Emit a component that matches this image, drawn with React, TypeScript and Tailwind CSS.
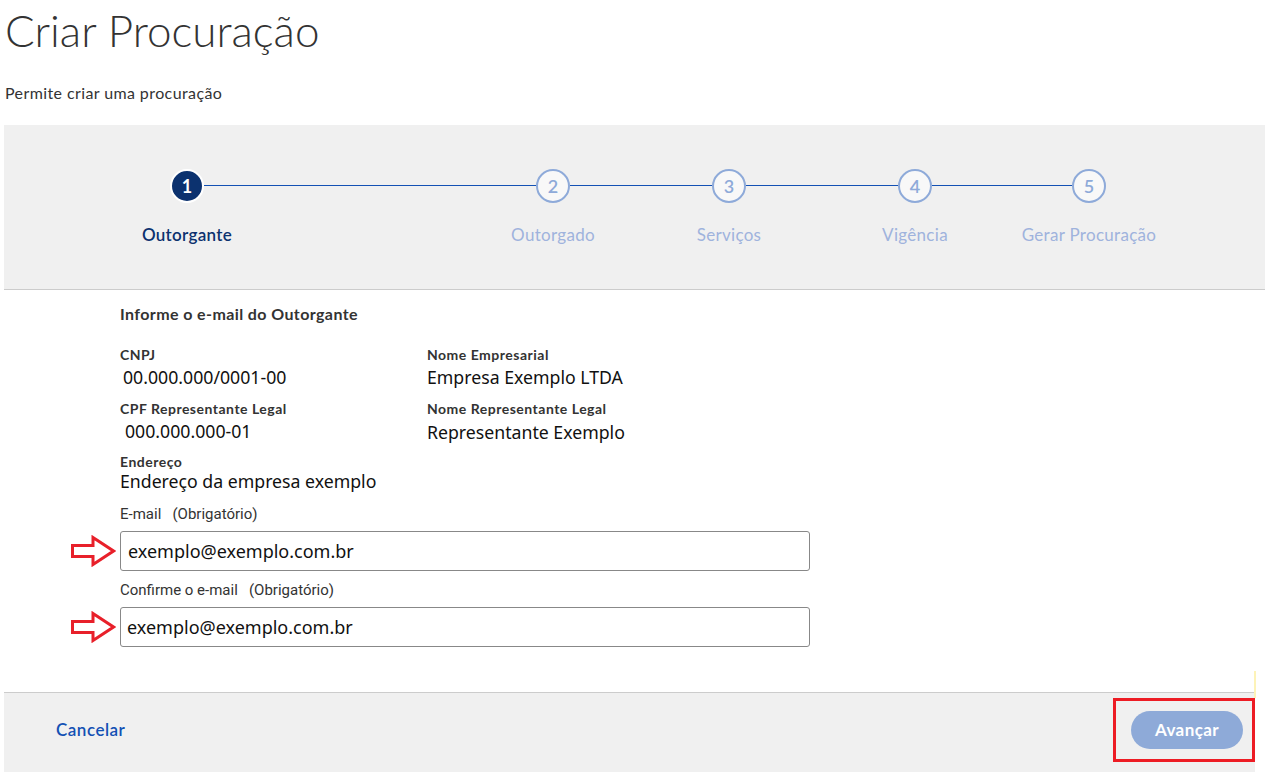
import React from "react"

const steps = [
  { n: 1, label: "Outorgante" },
  { n: 2, label: "Outorgado" },
  { n: 3, label: "Serviços" },
  { n: 4, label: "Vigência" },
  { n: 5, label: "Gerar Procuração" },
]

const segments = ["w-[332px]", "w-[142px]", "w-[152px]", "w-[140px]"]

function Arrow() {
  return (
    <svg width="46" height="32" viewBox="0 0 46 32" className="shrink-0">
      <path d="M2.5 10.5 H23 V2.5 L43.5 16 L23 29.5 V21.5 H2.5 Z" fill="#fff" stroke="#e8202a" strokeWidth="3" strokeLinejoin="miter" />
    </svg>
  )
}

function Stepper() {
  return (
    <div className="ml-[4px] h-[165px] w-[1261px] border-b border-[#cccccc] bg-[#f0f0f0] pl-[166px] pt-[44px]">
      <div className="flex items-start">
        {steps.map((s, i) => (
          <React.Fragment key={s.n}>
            <div className="flex w-[34px] flex-col items-center">
              {i === 0 ? (
                <div className="flex h-[34px] w-[34px] items-center justify-center rounded-full border-2 border-white bg-[#0c326f] text-[18px] font-bold text-white">
                  {s.n}
                </div>
              ) : (
                <div className="flex h-[34px] w-[34px] items-center justify-center rounded-full border-2 border-[#8eaad9] bg-[#f8f8f8] text-[18px] font-semibold text-[#8eaad9]">
                  {s.n}
                </div>
              )}
              <div
                className={
                  i === 0
                    ? "mt-[22px] whitespace-nowrap text-[17px] font-semibold leading-[20px] tracking-[0.3px] text-[#0c326f]"
                    : "mt-[22px] whitespace-nowrap text-[17px] leading-[20px] tracking-[0.3px] text-[#9fb3dd]"
                }
              >
                {s.label}
              </div>
            </div>
            {i < segments.length && <div className={`${segments[i]} mt-[16px] h-px bg-[#1351b4]`} />}
          </React.Fragment>
        ))}
      </div>
    </div>
  )
}

export default function App() {
  const label = "text-[14px] font-bold leading-[16px] tracking-[0.5px] text-[#333333]"
  const value = "text-[17.7px] leading-[22px] text-[#111111] [font-family:'Noto_Sans',sans-serif]"
  const input = "text-[18px] leading-[22px] text-[#111111] [font-family:'Noto_Sans',sans-serif]"
  const small = "text-[15px] leading-[16px] text-[#333333] [font-family:Roboto,sans-serif]"

  return (
    <div className="relative min-h-[772px] w-full bg-white [font-family:Lato,'Open_Sans',sans-serif]">
      <div className="pl-[5px] pt-[4px]">
        <h1 className="text-[44px] font-light leading-[52px] text-[#333333]">Criar Procuração</h1>
        <p className="mt-[27px] text-[16px] leading-[20px] tracking-[0.4px] text-[#333333]">Permite criar uma procuração</p>
      </div>

      <div className="mt-[22px]">
        <Stepper />
      </div>

      <div className="pl-[120px] pt-[14px]">
        <div className="text-[16px] font-bold leading-[20px] tracking-[0.4px] text-[#333333]">Informe o e-mail do Outorgante</div>

        <div className="mt-[23px] grid grid-cols-[307px_1fr]">
          <div>
            <div className={label}>CNPJ</div>
            <div className={`mt-[3px] pl-[3px] ${value}`}>00.000.000/0001-00</div>
          </div>
          <div>
            <div className={label}>Nome Empresarial</div>
            <div className={`mt-[3px] ${value}`}>Empresa Exemplo LTDA</div>
          </div>
          <div className="mt-[13px]">
            <div className={label}>CPF Representante Legal</div>
            <div className={`mt-[3px] pl-[5px] ${value}`}>000.000.000-01</div>
          </div>
          <div className="mt-[13px]">
            <div className={label}>Nome Representante Legal</div>
            <div className={`mt-[4px] ${value}`}>Representante Exemplo</div>
          </div>
        </div>

        <div className="mt-[11px]">
          <div className={label}>Endereço</div>
          <div className={value}>Endereço da empresa exemplo</div>
        </div>

        <div className={`mt-[14px] ${small}`}>E-mail&nbsp;&nbsp; (Obrigatório)</div>
        <div className="-ml-[50px] mt-[9px] flex items-center gap-[4px]">
          <Arrow />
          <input
            readOnly
            value="exemplo@exemplo.com.br"
            className={`h-[40px] w-[690px] rounded-[3px] border border-[#888888] bg-white px-[7px] outline-none ${input}`}
          />
        </div>

        <div className={`mt-[11px] ${small}`}>Confirme o e-mail&nbsp;&nbsp; (Obrigatório)</div>
        <div className="-ml-[50px] mt-[9px] flex items-center gap-[4px]">
          <Arrow />
          <input
            readOnly
            value="exemplo@exemplo.com.br"
            className={`h-[40px] w-[690px] rounded-[3px] border border-[#888888] bg-white px-[6px] outline-none ${input}`}
          />
        </div>
      </div>

      <div className="ml-[4px] mt-[45px] flex h-[80px] w-[1251px] justify-between border-t border-[#cccccc] bg-[#f0f0f0] pl-[52px]">
        <div className="mt-[5px] flex h-[64px] items-center text-[17px] font-semibold tracking-[0.5px] text-[#1351b4]">Cancelar</div>
        <div className="mt-[5px] flex h-[64px] w-[142px] items-center border-[3px] border-[#ed1c24] pl-[15px]">
          <div className="flex h-[38px] w-[112px] items-center justify-center rounded-full bg-[#8eaad8] text-[17px] font-bold tracking-[0.4px] text-white">
            Avançar
          </div>
        </div>
      </div>

      <div className="absolute left-[1254px] top-[671px] h-[27px] w-[2px] bg-[#fdf3b8]" />
    </div>
  )
}
